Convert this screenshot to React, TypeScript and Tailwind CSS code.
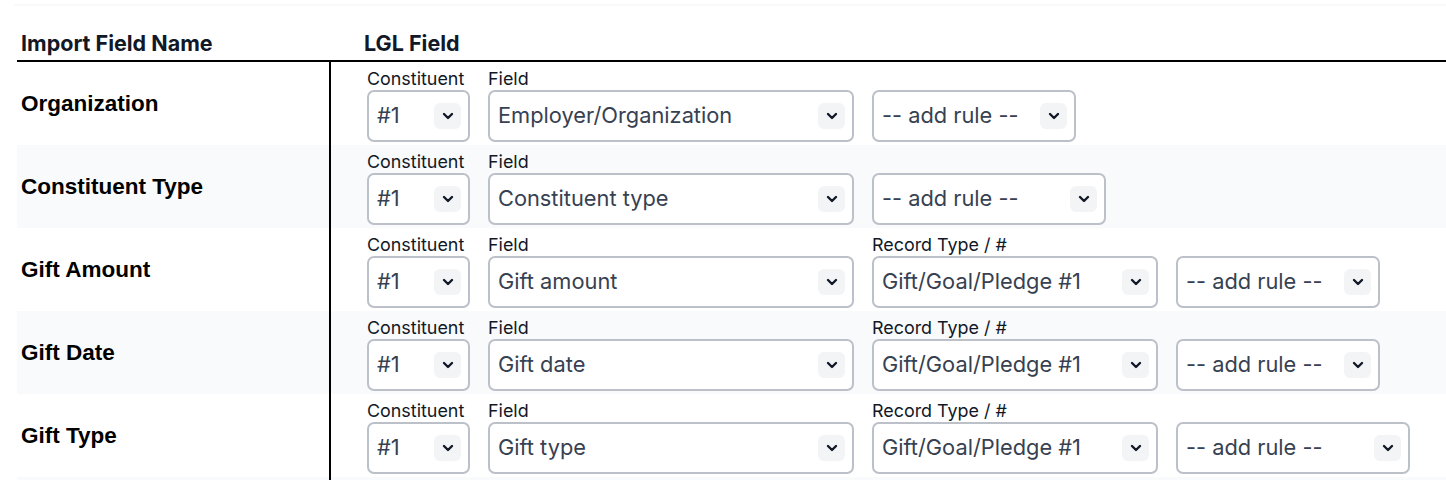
import React from "react";

const Chevron = () => (
  <svg width="12" height="8" viewBox="0 0 12 8" fill="none">
    <path d="M2 2l4 4 4-4" stroke="#111827" strokeWidth="2.4" strokeLinecap="round" strokeLinejoin="round" />
  </svg>
);

function Select({ value, w }: { value: string; w: string }) {
  return (
    <div className={`${w} h-[52px] bg-white border-2 border-[#bcc0c9] rounded-[7px] flex items-center justify-between pl-[8px] pr-[7px]`}>
      <span className="text-[21.8px] text-[#374151] whitespace-nowrap leading-none">{value}</span>
      <span className="w-[27px] h-[26px] rounded-[6px] bg-[#f3f4f6] flex items-center justify-center">
        <Chevron />
      </span>
    </div>
  );
}

function Labeled({ label, children }: { label: string; children: React.ReactNode }) {
  return (
    <div className="flex flex-col">
      <div className="text-[17.9px] leading-[22px] text-[#111827] h-[22px] whitespace-nowrap">{label}</div>
      {children}
    </div>
  );
}

type Row = {
  name: string;
  field: string;
  record?: boolean;
  ruleW: string;
  gray: boolean;
};

const rows: Row[] = [
  { name: "Organization", field: "Employer/Organization", ruleW: "w-[204px]", gray: false },
  { name: "Constituent Type", field: "Constituent type", ruleW: "w-[234px]", gray: true },
  { name: "Gift Amount", field: "Gift amount", record: true, ruleW: "w-[204px]", gray: false },
  { name: "Gift Date", field: "Gift date", record: true, ruleW: "w-[204px]", gray: true },
  { name: "Gift Type", field: "Gift type", record: true, ruleW: "w-[234px]", gray: false },
];

export default function App() {
  return (
    <div className="w-[1446px] h-[480px] overflow-hidden bg-white" style={{ fontFamily: "Inter, 'Noto Sans', sans-serif" }}>
      <div className="pt-[4px] pl-[14px]">
        <div className="h-[2px] bg-[#f8f9fa]" />
      </div>
      <div className="ml-[17px]">
        <div className="flex items-end h-[56px] pb-[4px] border-b-2 border-black">
          <div className="w-[347px] pl-[4px] text-[21.5px] font-bold text-[#111827] leading-[26px] whitespace-nowrap">Import Field Name</div>
          <div className="text-[21.5px] font-bold text-[#111827] leading-[26px]">LGL Field</div>
        </div>
        {rows.map((r) => (
          <div key={r.name} className={`flex h-[83px] ${r.gray ? "bg-[#f9fafb]" : "bg-white"}`}>
            <div className="w-[314px] border-r-2 border-black flex items-center pl-[4px]">
              <span className="text-[22.5px] font-bold text-black whitespace-nowrap" style={{ fontFamily: "'Liberation Sans', Arial, sans-serif" }}>{r.name}</span>
            </div>
            <div className="flex gap-[18px] pl-[36px] pt-[6px]">
              <Labeled label="Constituent">
                <Select value="#1" w="w-[103px]" />
              </Labeled>
              <Labeled label="Field">
                <Select value={r.field} w="w-[366px]" />
              </Labeled>
              {r.record && (
                <Labeled label="Record Type / #">
                  <Select value="Gift/Goal/Pledge #1" w="w-[286px]" />
                </Labeled>
              )}
              <Labeled label="">
                <Select value="-- add rule --" w={r.ruleW} />
              </Labeled>
            </div>
          </div>
        ))}
        <div className="h-[10px] bg-[#f9fafb] flex">
          <div className="w-[314px] border-r-2 border-black" />
        </div>
      </div>
    </div>
  );
}
